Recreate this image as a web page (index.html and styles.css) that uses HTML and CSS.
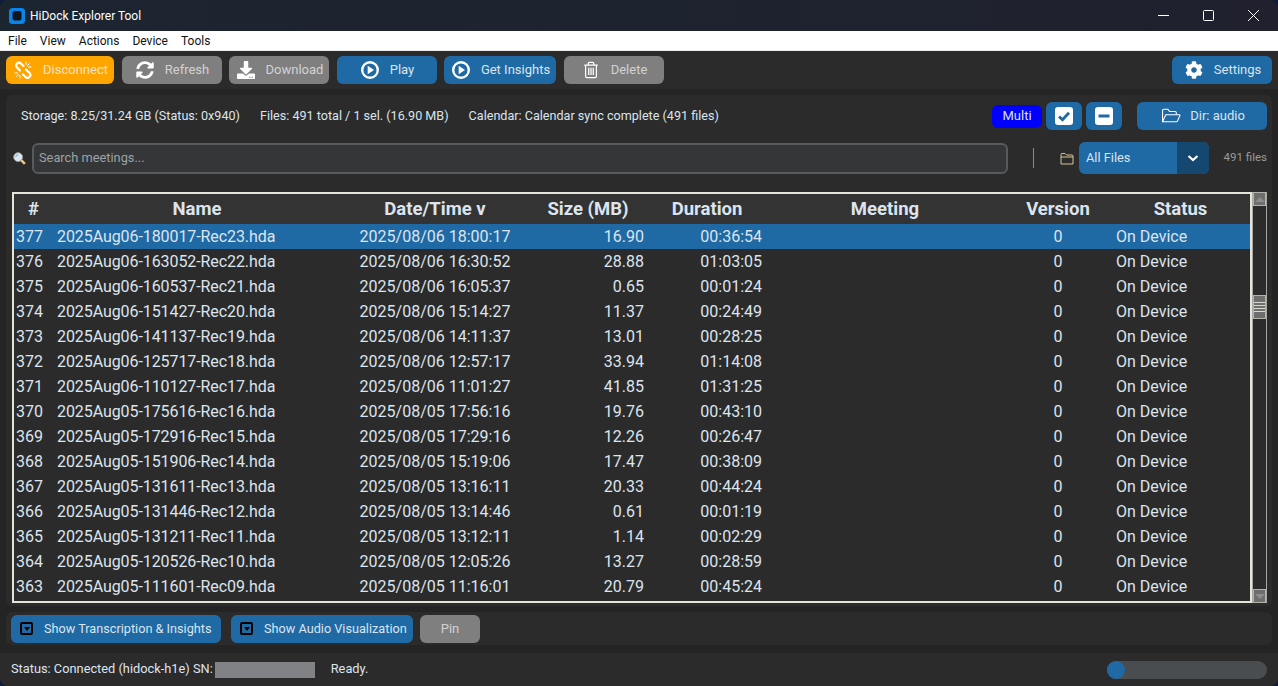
FILE: index.html
```html
<!DOCTYPE html>
<html lang="en">
  <head>
    <meta charset="UTF-8" />
    <title>HiDock Explorer Tool</title>
    <link rel="stylesheet" href="styles.css">
  </head>
  <body>
    <div class="window">
      <header class="titlebar">
        <svg class="app-icon" viewBox="0 0 16 16"><rect width="16" height="16" rx="3.5" fill="#0a84e8"/><rect x="3.5" y="3" width="9" height="9.5" rx="2" fill="#10161f"/></svg>
        <span class="app-title">HiDock Explorer Tool</span>
        <div class="win-controls">
          <svg viewBox="0 0 11 11"><path d="M0 5.500h11" stroke="#fff" fill="none"/></svg>
          <svg viewBox="0 0 11 11"><rect x=".5" y=".5" width="10" height="10" rx="1" stroke="#fff" fill="none"/></svg>
          <svg viewBox="0 0 11 11"><path d="M0 0l11 11M11 0L0 11" stroke="#fff" fill="none"/></svg>
        </div>
      </header>
      <nav class="menubar">
        <span>File</span><span>View</span><span>Actions</span><span>Device</span><span>Tools</span>
      </nav>

      <div class="toolbar">
        <button class="btn btn-orange w108">
          <svg class="ico" viewBox="0 0 18 18" fill="none" stroke="#fff" stroke-linecap="round"><g stroke-width="2.200"><path d="M6 9.500L3 6.500A2.800 2.800 0 0 1 7 2.500L9.500 5"/><path d="M12 8.500l3.500 3.500a2.800 2.800 0 0 1-4 4L9 13.500"/></g><path d="M12 1v2.500M15.500 2.500l-2 2M17 6h-2.500M1 12h2.500M2.500 15.500l2-2M6 14.500V17"/></svg>
          <span>Disconnect</span>
        </button>
        <button class="btn btn-gray w100">
          <svg class="ico" viewBox="0 0 512 512" fill="#fff"><path d="M370.700 133.300C339.500 104 298.900 88 255.800 88c-77.500.1-144.300 53.200-162.800 126.900-1.300 5.400-6.100 9.100-11.600 9.100H24.100c-7.500 0-13.200-6.800-11.800-14.200C33.900 94.900 134.800 8 256 8c66.400 0 126.800 26.100 171.300 68.700L463 41c15.100-15.100 41-4.400 41 17V192c0 13.300-10.700 24-24 24H345.900c-21.400 0-32.100-25.900-17-41l41.800-41.700zM32 296h134.100c21.400 0 32.100 25.900 17 41l-41.800 41.800c31.300 29.300 71.800 45.300 114.900 45.200 77.400-.1 144.300-53.100 162.800-126.800 1.300-5.400 6.100-9.100 11.600-9.100h57.300c7.500 0 13.200 6.800 11.800 14.200C478.100 417.100 377.200 504 256 504c-66.400 0-126.800-26.100-171.300-68.700L49 471c-15.100 15.100-41 4.400-41-17V320c0-13.300 10.700-24 24-24z"/></svg>
          <span>Refresh</span>
        </button>
        <button class="btn btn-gray w100">
          <svg class="ico" viewBox="0 0 512 512" fill="#fff"><path d="M216 0h80c13.300 0 24 10.700 24 24v168h87.700c17.800 0 26.700 21.500 14.100 34.100L269.700 378.300c-7.500 7.500-19.800 7.500-27.300 0L90.100 226.100c-12.600-12.600-3.700-34.100 14.100-34.100H192V24c0-13.300 10.700-24 24-24zM512 376v112c0 13.300-10.700 24-24 24H24c-13.300 0-24-10.700-24-24V376c0-13.300 10.700-24 24-24h146.700l49 49c20.100 20.100 52.500 20.100 72.600 0l49-49H488c13.300 0 24 10.700 24 24zM388 464c0-11-9-20-20-20s-20 9-20 20 9 20 20 20 20-9 20-20zm64 0c0-11-9-20-20-20s-20 9-20 20 9 20 20 20 20-9 20-20z"/></svg>
          <span>Download</span>
        </button>
        <button class="btn btn-blue w100">
          <svg class="ico" viewBox="1 1 18 18"><circle cx="10" cy="10" r="7.800" fill="none" stroke="#fff" stroke-width="2.400"/><path d="M7.700 5.800l6.300 4.200-6.300 4.200z" fill="#fff"/></svg>
          <span>Play</span>
        </button>
        <button class="btn btn-blue w112">
          <svg class="ico" viewBox="1 1 18 18"><circle cx="10" cy="10" r="7.800" fill="none" stroke="#fff" stroke-width="2.400"/><path d="M7.700 5.800l6.300 4.200-6.300 4.200z" fill="#fff"/></svg>
          <span>Get Insights</span>
        </button>
        <button class="btn btn-gray w100">
          <svg class="ico" viewBox="0 0 20 20" fill="none" stroke="#fff" stroke-width="1.400"><path d="M2.500 4.500h15M7 4.500V2.500a1 1 0 0 1 1-1h4a1 1 0 0 1 1 1v2M4 4.500v12.500a1.500 1.500 0 0 0 1.500 1.500h9a1.500 1.500 0 0 0 1.500-1.500V4.500M7.500 7.500v8M10 7.500v8M12.500 7.500v8"/></svg>
          <span>Delete</span>
        </button>
        <button class="btn btn-blue w100 push-right">
          <svg class="ico" viewBox="0 0 512 512" fill="#fff"><path d="M487.400 315.700l-42.600-24.600c4.300-23.200 4.300-47 0-70.200l42.600-24.600c4.900-2.800 7.100-8.600 5.500-14-11.100-35.600-30-67.800-54.700-94.600-3.800-4.100-10-5.100-14.800-2.300L380.800 110c-17.900-15.400-38.500-27.300-60.800-35.100V25.800c0-5.600-3.900-10.500-9.400-11.700-36.700-8.200-74.300-7.800-109.200 0-5.500 1.200-9.400 6.100-9.400 11.700V75c-22.200 7.900-42.800 19.800-60.800 35.100L88.700 85.500c-4.900-2.800-11-1.900-14.800 2.300-24.700 26.700-43.600 58.900-54.700 94.600-1.700 5.400.6 11.200 5.500 14L67.300 221c-4.300 23.200-4.300 47 0 70.200l-42.600 24.600c-4.900 2.800-7.100 8.600-5.500 14 11.100 35.600 30 67.800 54.700 94.600 3.800 4.100 10 5.100 14.800 2.300l42.600-24.600c17.900 15.400 38.500 27.300 60.800 35.100v49.200c0 5.600 3.900 10.500 9.400 11.700 36.700 8.200 74.300 7.800 109.200 0 5.500-1.200 9.400-6.100 9.400-11.700v-49.200c22.200-7.900 42.800-19.800 60.800-35.100l42.600 24.600c4.900 2.800 11 1.900 14.800-2.300 24.700-26.700 43.600-58.900 54.700-94.600 1.500-5.500-.7-11.300-5.600-14.100zM256 336c-44.100 0-80-35.900-80-80s35.900-80 80-80 80 35.900 80 80-35.900 80-80 80z"/></svg>
          <span>Settings</span>
        </button>
      </div>

      <main class="panel">
        <div class="info-row">
          <span>Storage: 8.25/31.24 GB (Status: 0x940)</span>
          <span>Files: 491 total / 1 sel. (16.90 MB)</span>
          <span>Calendar: Calendar sync complete (491 files)</span>
          <div class="info-actions">
            <button class="btn-multi">Multi</button>
            <button class="btn btn-blue square">
              <svg class="ico-sq" viewBox="0 0 18 18"><rect width="18" height="18" rx="3" fill="#fff"/><path d="M4 9.500l3.500 3.300L14 5.800" fill="none" stroke="#1f6aa5" stroke-width="2.800"/></svg>
            </button>
            <button class="btn btn-blue square">
              <svg class="ico-sq" viewBox="0 0 18 18"><rect width="18" height="18" rx="3" fill="#fff"/><rect x="3.500" y="7.500" width="11" height="3" fill="#1f6aa5"/></svg>
            </button>
            <button class="btn btn-blue w130 gap9">
              <svg class="ico-dir" viewBox="0 0 22 18" fill="none" stroke="#fff" stroke-width="1.200"><path d="M1.500 15.500V3a1.500 1.500 0 0 1 1.500-1.500h4.500l2 2.500h6a1.500 1.500 0 0 1 1.500 1.500v1.500"/><path d="M1.500 15.500l3.500-7.500a1 1 0 0 1 1-.5h14.500a.7.700 0 0 1 .6 1l-3 6.500a1 1 0 0 1-1 .5z"/></svg>
              <span>Dir: audio</span>
            </button>
          </div>
        </div>

        <div class="search-row">
          <svg class="ico-search" viewBox="0 0 14 14"><circle cx="5.500" cy="5.500" r="4.800" fill="#dbe6f2" stroke="#9a9a92"/><path d="M3 5.500a2.500 2.500 0 0 1 2.500-2.500" stroke="#7fb0e0" stroke-width="1.200" fill="none"/><path d="M8.800 8.800l4 4" stroke="#f0c888" stroke-width="2.600"/></svg>
          <div class="search-box">Search meetings...</div>
          <div class="vsep"></div>
          <svg class="ico-folder" viewBox="0 0 14 13" fill="none" stroke="#d8c49a"><path d="M1 12V2.500a1 1 0 0 1 1-1h3l1.500 1.500H12a1 1 0 0 1 1 1V12z"/><path d="M1 5h12"/></svg>
          <div class="combo">
            <span class="combo-value">All Files</span>
            <span class="combo-arrow"><svg viewBox="0 0 12 8"><path d="M1.500 2l4.500 4 4.500-4" fill="none" stroke="#fff" stroke-width="2.200"/></svg></span>
          </div>
          <span class="file-count">491 files</span>
        </div>

        <div class="table-wrap">
          <div class="table-box">
            <table class="files">
              <colgroup>
                <col class="c-num"><col class="c-name"><col class="c-date"><col class="c-size"><col class="c-dur"><col class="c-meet"><col class="c-ver"><col class="c-status">
              </colgroup>
              <thead>
                <tr><th>#</th><th>Name</th><th>Date/Time v</th><th>Size (MB)</th><th>Duration</th><th>Meeting</th><th>Version</th><th>Status</th></tr>
              </thead>
              <tbody>
                <tr class="selected"><td>377</td><td>2025Aug06-180017-Rec23.hda</td><td>2025/08/06 18:00:17</td><td>16.90</td><td>00:36:54</td><td></td><td>0</td><td>On Device</td></tr>
                <tr><td>376</td><td>2025Aug06-163052-Rec22.hda</td><td>2025/08/06 16:30:52</td><td>28.88</td><td>01:03:05</td><td></td><td>0</td><td>On Device</td></tr>
                <tr><td>375</td><td>2025Aug06-160537-Rec21.hda</td><td>2025/08/06 16:05:37</td><td>0.65</td><td>00:01:24</td><td></td><td>0</td><td>On Device</td></tr>
                <tr><td>374</td><td>2025Aug06-151427-Rec20.hda</td><td>2025/08/06 15:14:27</td><td>11.37</td><td>00:24:49</td><td></td><td>0</td><td>On Device</td></tr>
                <tr><td>373</td><td>2025Aug06-141137-Rec19.hda</td><td>2025/08/06 14:11:37</td><td>13.01</td><td>00:28:25</td><td></td><td>0</td><td>On Device</td></tr>
                <tr><td>372</td><td>2025Aug06-125717-Rec18.hda</td><td>2025/08/06 12:57:17</td><td>33.94</td><td>01:14:08</td><td></td><td>0</td><td>On Device</td></tr>
                <tr><td>371</td><td>2025Aug06-110127-Rec17.hda</td><td>2025/08/06 11:01:27</td><td>41.85</td><td>01:31:25</td><td></td><td>0</td><td>On Device</td></tr>
                <tr><td>370</td><td>2025Aug05-175616-Rec16.hda</td><td>2025/08/05 17:56:16</td><td>19.76</td><td>00:43:10</td><td></td><td>0</td><td>On Device</td></tr>
                <tr><td>369</td><td>2025Aug05-172916-Rec15.hda</td><td>2025/08/05 17:29:16</td><td>12.26</td><td>00:26:47</td><td></td><td>0</td><td>On Device</td></tr>
                <tr><td>368</td><td>2025Aug05-151906-Rec14.hda</td><td>2025/08/05 15:19:06</td><td>17.47</td><td>00:38:09</td><td></td><td>0</td><td>On Device</td></tr>
                <tr><td>367</td><td>2025Aug05-131611-Rec13.hda</td><td>2025/08/05 13:16:11</td><td>20.33</td><td>00:44:24</td><td></td><td>0</td><td>On Device</td></tr>
                <tr><td>366</td><td>2025Aug05-131446-Rec12.hda</td><td>2025/08/05 13:14:46</td><td>0.61</td><td>00:01:19</td><td></td><td>0</td><td>On Device</td></tr>
                <tr><td>365</td><td>2025Aug05-131211-Rec11.hda</td><td>2025/08/05 13:12:11</td><td>1.14</td><td>00:02:29</td><td></td><td>0</td><td>On Device</td></tr>
                <tr><td>364</td><td>2025Aug05-120526-Rec10.hda</td><td>2025/08/05 12:05:26</td><td>13.27</td><td>00:28:59</td><td></td><td>0</td><td>On Device</td></tr>
                <tr><td>363</td><td>2025Aug05-111601-Rec09.hda</td><td>2025/08/05 11:16:01</td><td>20.79</td><td>00:45:24</td><td></td><td>0</td><td>On Device</td></tr>
              </tbody>
            </table>
          </div>
          <div class="scrollbar">
            <div class="sb-btn"><i class="tri-up"></i></div>
            <div class="sb-track">
              <div class="sb-thumb"><i></i><i></i><i></i><i></i></div>
            </div>
            <div class="sb-btn"><i class="tri-down"></i></div>
          </div>
        </div>
      </main>

      <section class="panel-bottom">
        <button class="btn btn-blue w210 toggle-btn"><span class="toggle"></span><span class="toggle-label">Show Transcription &amp; Insights</span></button>
        <button class="btn btn-blue w182 toggle-btn"><span class="toggle"></span><span class="toggle-label">Show Audio Visualization</span></button>
        <button class="btn btn-gray w60"><span>Pin</span></button>
      </section>

      <footer class="statusbar">
        <span class="status-text">Status: Connected (hidock-h1e) SN:</span>
        <span class="redacted"></span>
        <span class="status-text ready">Ready.</span>
        <div class="progress"><div class="progress-knob"></div></div>
      </footer>
    </div>
  </body>
</html>
```

FILE: styles.css
```css
* {
  box-sizing: border-box;
  font-family: Roboto, "Liberation Sans", sans-serif;
}
html,
body {
  margin: 0;
  height: 100%;
  overflow: hidden;
  background: #101a3c;
}
.window {
  height: 686px;
  display: flex;
  flex-direction: column;
  background: #242424;
  border-radius: 8px;
  overflow: hidden;
  color: #dce4ee;
  font-size: 13px;
}

/* title + menu */
.titlebar {
  height: 31px;
  flex: none;
  display: flex;
  align-items: center;
  padding-left: 9px;
  background: linear-gradient(90deg, #1b2530, #20202e);
  color: #fff;
}
.app-icon {
  width: 16px;
  height: 16px;
}
.app-title {
  margin-left: 5px;
  font-size: 12px;
}
.win-controls {
  margin-left: auto;
  display: flex;
  align-items: center;
  gap: 34px;
  padding-right: 19px;
}
.win-controls svg {
  width: 11px;
  height: 11px;
}
.menubar {
  height: 20px;
  flex: none;
  display: flex;
  align-items: center;
  gap: 13px;
  padding-left: 8px;
  background: #fff;
  border-bottom: 1px solid #ececec;
  color: #111;
  font-size: 12px;
}

/* buttons */
.toolbar {
  height: 38px;
  flex: none;
  display: flex;
  align-items: flex-start;
  gap: 7.5px;
  padding: 5px 6px 0;
  background: #2b2b2b;
}
.btn {
  height: 28px;
  padding: 0 0 0 2px;
  border: 0;
  border-radius: 6px;
  display: flex;
  align-items: center;
  justify-content: center;
  gap: 11px;
  color: #dce4ee;
  font-size: 13px;
}
.btn span {
  margin-bottom: 2px;
}
.btn-blue {
  background: #1f6aa5;
}
.btn-gray {
  background: #7f7f7f;
  color: #d2d2d2;
}
.btn-orange {
  background: #ffa500;
  color: #f5e3c5;
}
.gap9 {
  gap: 9px;
}
.w60 { width: 60px; padding: 0; }
.w100 { width: 100px; }
.w108 { width: 108px; }
.w112 { width: 112px; }
.w130 { width: 130px; }
.w182 { width: 182px; }
.w210 { width: 210px; }
.push-right {
  margin-left: auto;
}
.ico {
  width: 18px;
  height: 18px;
  flex: none;
}

/* main panel */
.panel {
  height: 511px;
  flex: none;
  margin: 6px 6px 0;
  background: #2b2b2b;
  border-radius: 6px;
  display: flex;
  flex-direction: column;
}
.info-row {
  height: 28px;
  margin-top: 7px;
  display: flex;
  align-items: center;
  gap: 20px;
  padding: 0 5px 0 15px;
  font-size: 12.6px;
}
.info-row > span {
  margin-bottom: 2px;
}
.info-actions {
  margin-left: auto;
  display: flex;
  align-items: center;
  gap: 4px;
}
.btn-multi {
  width: 50px;
  height: 23px;
  border: 0;
  border-radius: 6px;
  padding: 0 0 2px;
  background: #0000ff;
  color: #dce4ee;
  font-size: 13px;
}
.square {
  width: 36px;
  padding: 0;
}
.square + .w130 {
  margin-left: 11px;
}
.ico-sq {
  width: 18px;
  height: 18px;
}
.ico-dir {
  width: 20px;
  height: 16px;
}

.search-row {
  height: 32px;
  margin-top: 12px;
  display: flex;
  align-items: center;
  padding: 0 5px 0 7px;
}
.ico-search {
  width: 13px;
  height: 13px;
  margin-right: 6px;
}
.search-box {
  width: 976px;
  height: 31px;
  border: 2px solid #565b5e;
  border-radius: 6px;
  background: #343638;
  padding: 0 0 2px 5px;
  display: flex;
  align-items: center;
  color: #9ea2a5;
  font-size: 12.8px;
}
.vsep {
  width: 1px;
  height: 20px;
  margin-left: 25px;
  background: #6f93ae;
}
.ico-folder {
  width: 14px;
  height: 13px;
  margin-left: 26px;
}
.combo {
  width: 130px;
  height: 32px;
  margin-left: 5px;
  display: flex;
  border-radius: 6px;
  overflow: hidden;
  background: #1f6aa5;
}
.combo-value {
  flex: 1;
  padding: 0 0 2px 7px;
  display: flex;
  align-items: center;
  font-size: 12.8px;
}
.combo-arrow {
  width: 32px;
  background: #144870;
  display: flex;
  align-items: center;
  justify-content: center;
}
.combo-arrow svg {
  width: 12px;
  height: 8px;
}
.file-count {
  margin: 0 0 2px auto;
  font-size: 11.5px;
  color: #9a9a9a;
}

/* table */
.table-wrap {
  height: 411px;
  margin: 18px 5px 0 6px;
  display: flex;
}
.table-box {
  width: 1240px;
  border: 2px solid #e4e4da;
  background: #2b2b2b;
  overflow: hidden;
}
.files {
  width: 1236px;
  table-layout: fixed;
  border-collapse: collapse;
}
.c-num { width: 39px; }
.c-name { width: 288px; }
.c-date { width: 188px; }
.c-size { width: 118px; }
.c-dur { width: 120px; }
.c-meet { width: 236px; }
.c-ver { width: 110px; }
.c-status { width: 137px; }
.files th {
  height: 30px;
  padding: 0;
  background: #333;
  font-size: 18.5px;
  font-weight: 700;
  text-align: center;
}
.files th:last-child {
  padding-right: 2px;
}
.files td {
  height: 25px;
  padding: 0 4px;
  font-size: 16px;
  white-space: nowrap;
  overflow: hidden;
}
.files td:nth-child(1) { padding-left: 2px; }
.files td:nth-child(2) { letter-spacing: -0.08px; }
.files td:nth-child(3),
.files td:nth-child(7) { text-align: center; }
.files td:nth-child(4) { text-align: right; padding-right: 3px; }
.files td:nth-child(5) { text-align: right; padding-right: 5px; }
.files td:nth-child(8) { padding-left: 3px; }
.selected td {
  background: #1f6aa5;
}

/* tk scrollbar */
.scrollbar {
  width: 15px;
  border: solid #a8a8a0;
  border-width: 0 1px;
  display: flex;
  flex-direction: column;
  background: #2b2b2b;
}
.sb-btn {
  height: 14px;
  flex: none;
  background: #6e6e6e;
  border: 1px solid #b4b4ac;
  display: flex;
  align-items: center;
  justify-content: center;
}
.tri-up,
.tri-down {
  width: 0;
  height: 0;
  border-left: 5px solid transparent;
  border-right: 5px solid transparent;
}
.tri-up { border-bottom: 5px solid #8c8c8c; }
.tri-down { border-top: 5px solid #8c8c8c; }
.sb-track {
  flex: 1;
  padding-top: 89px;
}
.sb-thumb {
  height: 24px;
  background: #6e6e6e;
  border: 1px solid #b4b4ac;
  display: flex;
  flex-direction: column;
  justify-content: center;
  gap: 2px;
}
.sb-thumb i {
  display: block;
  height: 1px;
  background: #d8d8d0;
}

/* bottom */
.panel-bottom {
  height: 33px;
  flex: none;
  margin: 6px 6px 0;
  padding: 3px 5px 0;
  background: #2b2b2b;
  border-radius: 6px;
  display: flex;
  gap: 10px;
  align-items: flex-start;
}
.panel-bottom .w60 {
  margin-left: -3px;
}
.toggle-btn {
  justify-content: flex-start;
  padding-left: 9px;
}
.toggle-label {
  font-size: 12.7px;
}
.toggle {
  width: 13px;
  height: 13px;
  flex: none;
  border: 2px solid #000;
  border-radius: 2px;
  background: #1f6aa5;
  position: relative;
}
.toggle::after {
  content: "";
  position: absolute;
  left: 2px;
  top: 3px;
  border-left: 3px solid transparent;
  border-right: 3px solid transparent;
  border-top: 4px solid #000;
}
.statusbar {
  height: 33px;
  flex: none;
  margin-top: 8px;
  display: flex;
  align-items: center;
  padding: 0 11px;
  background: #2b2b2b;
}
.status-text {
  margin-bottom: 2px;
  font-size: 12.8px;
}
.redacted {
  width: 100px;
  height: 16px;
  margin-left: 2px;
  background: #808285;
}
.ready {
  margin-left: 16px;
}
.progress {
  width: 160px;
  height: 18px;
  margin-left: auto;
  border-radius: 9px;
  background: #4a4d50;
}
.progress-knob {
  width: 18px;
  height: 18px;
  border-radius: 50%;
  background: #1f6aa5;
}
```
